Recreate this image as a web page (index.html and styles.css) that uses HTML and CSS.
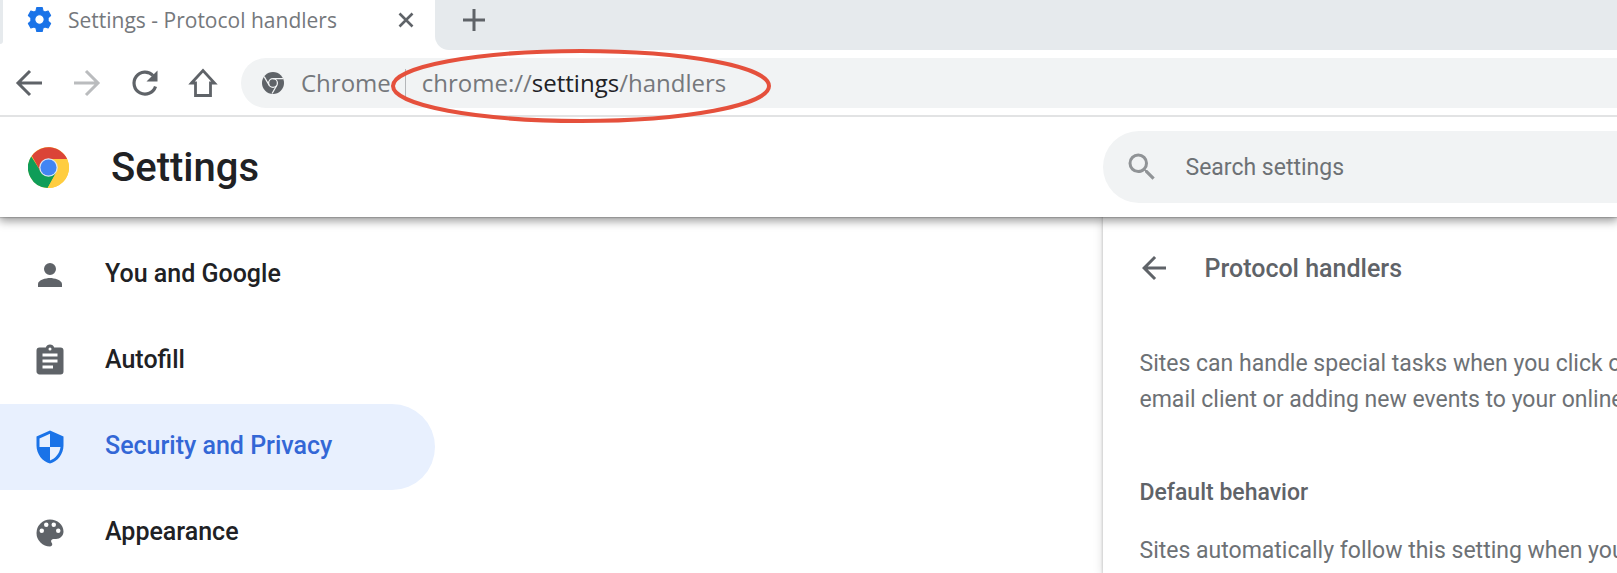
FILE: index.html
```html
<!DOCTYPE html>
<html lang="en">
<head>
  <meta charset="UTF-8" />
  <meta name="viewport" content="width=device-width, initial-scale=1.0"/>
  <title>Settings - Protocol handlers</title>
  <link rel="stylesheet" href="styles.css">
</head>
<body>

<!-- Tab strip -->
<div class="tab-strip">
  <div class="tab-edge"></div>
  <div class="tab">
    <svg class="tab-icon" viewBox="0 0 24 24"><path fill="#1a73e8" stroke="#1a73e8" stroke-width="1" stroke-linejoin="round" fill-rule="evenodd" d="M9.300 0.600h5.400l.7 3.200 1.800 1 3.100-1 2.400 4.400-2.400 2.200v3.200l2.400 2.200-2.400 4.400-3.100-1-1.800 1-.7 3.200H9.300l-.7-3.200-1.800-1-3.100 1-2.400-4.400 2.400-2.200v-3.200L1.300 8.200l2.400-4.400 3.100 1 1.800-1zM12 7.500a4.500 4.500 0 1 0 0 9 4.500 4.500 0 0 0 0-9z"/></svg>
    <span class="tab-title">Settings - Protocol handlers</span>
    <button class="icon-button tab-close" aria-label="Close tab">
      <svg width="16" height="16" viewBox="0 0 16 16"><path d="M1.500 1.500l13 13M14.500 1.500l-13 13" stroke="#5f6368" stroke-width="2.600" fill="none"/></svg>
    </button>
  </div>
  <div class="tab-rest">
    <button class="icon-button" aria-label="New tab">
      <svg width="22" height="22" viewBox="0 0 22 22"><path d="M11 0v22M0 11h22" stroke="#5f6368" stroke-width="3" fill="none"/></svg>
    </button>
  </div>
</div>

<!-- Toolbar -->
<div class="toolbar">
  <div class="toolbar-buttons">
    <button class="icon-button" aria-label="Back">
      <svg class="icon" viewBox="0 0 36 36"><path d="M31 18H8M19 6L7 18l12 12" stroke="#5f6368" stroke-width="3" fill="none"/></svg>
    </button>
    <button class="icon-button" aria-label="Forward" disabled>
      <svg class="icon" viewBox="0 0 36 36"><path d="M5 18h23M17 6l12 12-12 12" stroke="#babcbe" stroke-width="3" fill="none"/></svg>
    </button>
    <button class="icon-button" aria-label="Reload">
      <svg class="icon" viewBox="0 0 36 36"><path d="M28.500 21.500A11 11 0 1 1 26 10.500" stroke="#5f6368" stroke-width="3.200" fill="none"/><path d="M30.500 5.500v11h-11z" fill="#5f6368"/></svg>
    </button>
    <button class="icon-button" aria-label="Home">
      <svg class="icon" viewBox="0 0 36 36"><path d="M6.500 18L18 5.500 29.500 18h-4v12.500h-15V18z" stroke="#5f6368" stroke-width="2.800" fill="none"/></svg>
    </button>
  </div>
  <div class="omnibox">
    <svg class="site-icon" viewBox="0 0 24 24"><circle cx="12" cy="12" r="12" fill="#5f6368"/><circle cx="12" cy="12" r="4.800" fill="none" stroke="#f1f3f4" stroke-width="1.400"/><path d="M12 7.200h11M7.800 14.400L2.400 5M16.200 14.400L11 23.500" stroke="#f1f3f4" stroke-width="1.400" fill="none"/></svg>
    <span class="site-name">Chrome</span>
    <span class="site-line"></span>
    <span class="url">chrome://<b>settings</b>/handlers</span>
    <svg class="circle-mark" width="382" height="78" viewBox="0 0 382 78"><ellipse cx="191" cy="39" rx="188" ry="35" fill="none" stroke="#e5503c" stroke-width="4"/></svg>
  </div>
</div>

<!-- Settings header -->
<header class="header">
  <div class="brand">
    <svg class="logo" viewBox="0 0 48 48">
      <circle cx="24" cy="24" r="24" fill="#ffcd40"/>
      <path fill="#0f9d58" d="M3.800 11A24 24 0 0 0 23 48l9.600-17L24 24l-8.700 5z"/>
      <path fill="#db4437" d="M4.500 10.500L15 29l9-5V14h21.800A24 24 0 0 0 4.500 10.500z"/>
      <path fill="#ffcd40" d="M24 14h21.800A24 24 0 0 1 23 48l9.700-18z"/>
      <circle cx="24" cy="24" r="10.900" fill="#dfe6f3"/>
      <circle cx="24" cy="24" r="9.400" fill="#4285f4"/>
    </svg>
    <h1 class="title">Settings</h1>
  </div>
  <label class="search">
    <svg class="icon" viewBox="0 0 24 24"><path fill="#909396" d="M15.500 14h-.79l-.28-.27A6.470 6.470 0 0 0 16 9.500 6.500 6.500 0 1 0 9.500 16c1.610 0 3.090-.59 4.230-1.570l.27.28v.79l5 4.990L20.490 19zm-6 0a4.500 4.500 0 1 1 0-9 4.500 4.500 0 0 1 0 9z"/></svg>
    <input class="search-input" type="text" placeholder="Search settings" aria-label="Search settings">
  </label>
</header>

<!-- Main content -->
<div class="content">
  <nav class="menu">
    <a class="menu-item" href="#people">
      <svg class="icon" viewBox="0 0 24 24"><path d="M12 12a4 4 0 1 0 0-8 4 4 0 0 0 0 8zm0 2c-2.670 0-8 1.340-8 4v2h16v-2c0-2.660-5.330-4-8-4z"/></svg>
      <span class="menu-label">You and Google</span>
    </a>
    <a class="menu-item" href="#autofill">
      <svg class="icon" viewBox="0 0 24 24"><path d="M19 3h-4.180a3 3 0 0 0-5.640 0H5a2 2 0 0 0-2 2v14c0 1.100.9 2 2 2h14a2 2 0 0 0 2-2V5a2 2 0 0 0-2-2zm-7 0a1 1 0 1 1 0 2 1 1 0 0 1 0-2zm2 14H7v-2h7v2zm3-4H7v-2h10v2zm0-4H7V7h10v2z"/></svg>
      <span class="menu-label">Autofill</span>
    </a>
    <a class="menu-item selected" href="#privacy">
      <svg class="icon" viewBox="0 0 24 24"><path fill-rule="evenodd" d="M12 1L3 5v6c0 5.550 3.840 10.740 9 12 5.160-1.260 9-6.450 9-12V5zm0 2.200V12h7c-.53 4.120-3.280 7.790-7 8.940V12H5V6.300z"/></svg>
      <span class="menu-label">Security and Privacy</span>
    </a>
    <a class="menu-item" href="#appearance">
      <svg class="icon" viewBox="0 0 24 24"><path d="M12 3a9 9 0 0 0 0 18c.83 0 1.500-.67 1.500-1.500 0-.39-.15-.74-.39-1.010-.23-.26-.38-.61-.38-.99 0-.83.67-1.500 1.500-1.500H16c2.760 0 5-2.240 5-5 0-4.420-4.030-8-9-8zm-5.500 9a1.500 1.500 0 1 1 0-3 1.500 1.500 0 0 1 0 3zm3-4a1.500 1.500 0 1 1 0-3 1.500 1.500 0 0 1 0 3zm5 0a1.500 1.500 0 1 1 0-3 1.500 1.500 0 0 1 0 3zm3 4a1.500 1.500 0 1 1 0-3 1.500 1.500 0 0 1 0 3z"/></svg>
      <span class="menu-label">Appearance</span>
    </a>
  </nav>

  <main class="panel">
    <div class="panel-head">
      <button class="icon-button" aria-label="Back to site settings">
        <svg class="icon" viewBox="0 0 24 24"><path fill="#5f6368" d="M20 11H7.830l5.590-5.590L12 4l-8 8 8 8 1.410-1.410L7.830 13H20z"/></svg>
      </button>
      <h2 class="panel-title">Protocol handlers</h2>
    </div>
    <p class="text">Sites can handle special tasks when you click on<br>email client or adding new events to your online</p>
    <h3 class="subtitle">Default behavior</h3>
    <p class="text">Sites automatically follow this setting when you</p>
  </main>
</div>

</body>
</html>
```
FILE: styles.css
```css
body {
  margin: 0;
  background: white;
  font-family: Roboto, sans-serif;
  color: #202124;
  height: 100vh;
  display: flex;
  flex-direction: column;
  overflow: hidden;
}

h1, h2, h3, p {
  margin: 0;
}

.icon {
  width: 36px;
  height: 36px;
  flex: none;
}

.icon-button {
  display: flex;
  padding: 0;
  border: none;
  background: none;
  cursor: pointer;
}

/* Tab strip */
.tab-strip {
  display: flex;
  height: 50px;
  flex: none;
  font-family: "Open Sans", sans-serif;
}

.tab-edge {
  width: 3px;
  height: 44px;
  background: #e6eaed;
  border-bottom-right-radius: 3px;
}

.tab {
  display: flex;
  align-items: center;
  width: 432px;
  height: 39px;
  box-sizing: border-box;
  padding: 0 21px 0 24px;
}

.tab-icon {
  width: 25px;
  height: 25px;
}

.tab-title {
  flex: 1;
  margin-left: 16px;
  font-size: 21px;
  color: #75787c;
  white-space: nowrap;
}

.tab-rest {
  flex: 1;
  padding: 9px 28px;
  background: #e6eaed;
  border-bottom-left-radius: 14px;
}

/* Toolbar */
.toolbar {
  display: flex;
  align-items: center;
  gap: 20px;
  height: 65px;
  flex: none;
  padding-left: 11px;
  border-bottom: 2px solid #e2e3e4;
}

.toolbar-buttons {
  display: flex;
  gap: 22px;
}

/* sits above the header so the red circle is not covered */
.omnibox {
  position: relative;
  z-index: 2;
  display: flex;
  align-items: center;
  flex: 1;
  height: 50px;
  padding-left: 21px;
  background: #f1f3f4;
  border-radius: 25px 0 0 25px;
  font-family: "Open Sans", sans-serif;
  font-size: 24px;
  color: #75787c;
  white-space: nowrap;
}

.site-icon {
  width: 22px;
  height: 22px;
}

.site-name {
  margin-left: 17px;
}

.site-line {
  width: 1px;
  height: 28px;
  margin: 0 16px 0 14px;
  background: #b4b6b9;
}

.url b {
  font-weight: normal;
  color: #202124;
}

.circle-mark {
  position: absolute;
  left: 149px;
  top: -11px;
}

/* Header */
.header {
  position: relative;
  display: grid;
  grid-template-columns: 15fr 7fr;
  align-items: center;
  height: 100px;
  flex: none;
  background: white;
  box-shadow: 0 1px 1px rgba(0, 0, 0, 0.15), 0 3px 9px 1px rgba(0, 0, 0, 0.4);
  clip-path: inset(0 0 -20px 0);
  z-index: 1;
}

.brand {
  display: flex;
  align-items: center;
  gap: 42px;
  padding-left: 28px;
}

.logo {
  width: 41px;
  height: 41px;
}

.title {
  font-size: 40px;
  font-weight: 500;
}

.search {
  display: flex;
  align-items: center;
  gap: 26px;
  height: 72px;
  padding-left: 21px;
  background: #f1f3f4;
  border-radius: 36px 0 0 36px;
}

.search-input {
  flex: 1;
  min-width: 0;
  padding: 0;
  border: none;
  outline: none;
  background: none;
  font-family: inherit;
  font-size: 23px;
}

.search-input::placeholder {
  color: #6d7175;
}

/* Content */
.content {
  display: grid;
  grid-template-columns: 15fr 7fr;
  flex: 1;
}

.menu {
  padding-top: 15px;
}

.menu-item {
  display: flex;
  align-items: center;
  gap: 37px;
  width: 435px;
  height: 86px;
  box-sizing: border-box;
  padding-left: 32px;
  border-radius: 0 43px 43px 0;
  font-size: 25px;
  font-weight: 500;
  color: #202124;
  text-decoration: none;
}

.menu-label {
  padding-bottom: 3px;
}

.menu-item .icon {
  fill: #5f6368;
}

.menu-item.selected {
  background: #e8f0fe;
  color: #3367d6;
}

.menu-item.selected .icon {
  fill: #1a73e8;
}

.panel {
  min-width: 0;
  padding: 33px 0 0 37px;
  box-shadow: 0 0 2px 1px rgba(0, 0, 0, 0.13), 0 0 10px rgba(0, 0, 0, 0.14);
  color: #6d7175;
  white-space: nowrap;
}

.panel-head {
  display: flex;
  align-items: center;
  gap: 33px;
  margin-bottom: 60px;
  margin-left: -4px;
}

.panel-title {
  font-size: 25px;
  font-weight: 500;
  color: #5f6368;
}

.text {
  font-size: 23px;
  line-height: 36px;
}

.subtitle {
  margin: 57px 0 22px;
  font-size: 23px;
  font-weight: 500;
  line-height: 36px;
  color: #5f6368;
}
```
